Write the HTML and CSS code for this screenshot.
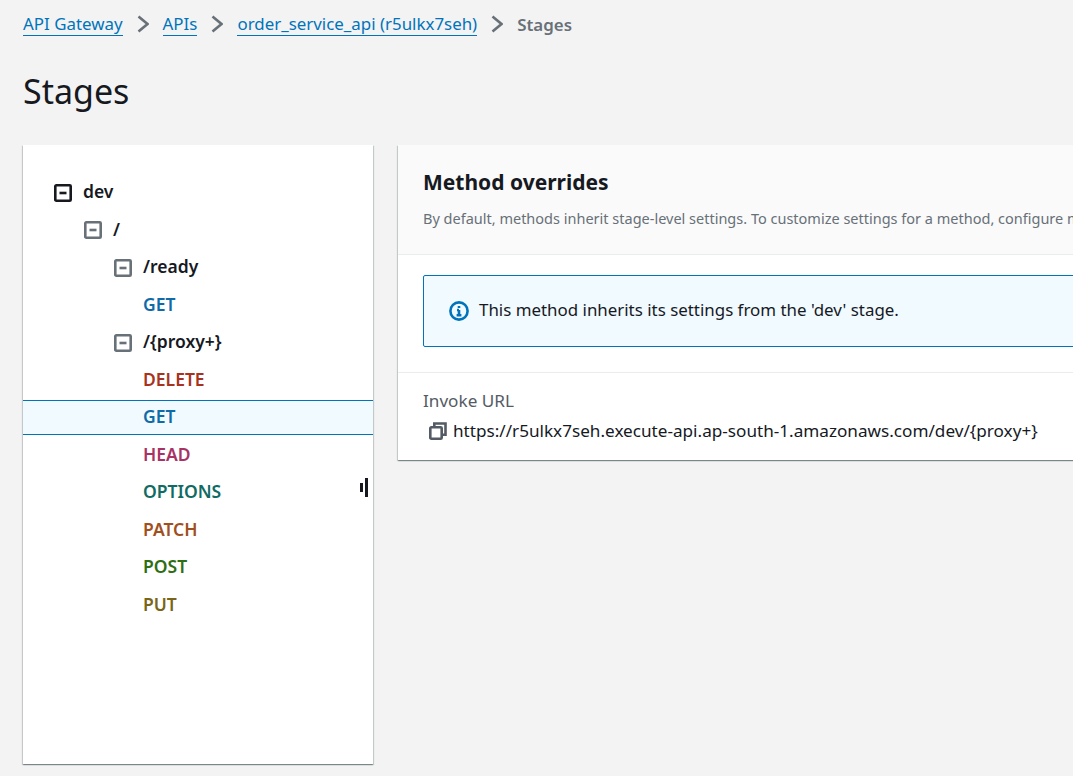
FILE: index.html
```html
<!DOCTYPE html>
<html lang="en">
<head>
    <meta charset="UTF-8">
    <meta name="viewport" content="width=device-width, initial-scale=1.0">
    <title>Stages</title>
    <link rel="stylesheet" href="styles.css">
</head>
<body>
    <!-- Breadcrumbs -->
    <nav class="crumbs">
        <a href="#">API Gateway</a>
        <svg class="chevron" viewBox="0 0 12 18"><path d="M1.5 1.5l9 7.5-9 7.5"/></svg>
        <a href="#">APIs</a>
        <svg class="chevron" viewBox="0 0 12 18"><path d="M1.5 1.5l9 7.5-9 7.5"/></svg>
        <a href="#">order_service_api (r5ulkx7seh)</a>
        <svg class="chevron" viewBox="0 0 12 18"><path d="M1.5 1.5l9 7.5-9 7.5"/></svg>
        <span class="crumb-current">Stages</span>
    </nav>

    <h1>Stages</h1>

    <div class="layout">
        <!-- Stage tree -->
        <aside class="tree">
            <div class="row depth-0 strong">
                <svg class="toggle toggle-dark" viewBox="0 0 18 18"><rect x="1.3" y="1.3" width="15.4" height="15.4" rx="1"/><path d="M5.5 9h7"/></svg>
                <span>dev</span>
            </div>
            <div class="row depth-1 strong">
                <svg class="toggle" viewBox="0 0 18 18"><rect x="1.3" y="1.3" width="15.4" height="15.4" rx="1"/><path d="M5.5 9h7"/></svg>
                <span>/</span>
            </div>
            <div class="row depth-2 strong">
                <svg class="toggle" viewBox="0 0 18 18"><rect x="1.3" y="1.3" width="15.4" height="15.4" rx="1"/><path d="M5.5 9h7"/></svg>
                <span>/ready</span>
            </div>
            <div class="row method get">GET</div>
            <div class="row depth-2 strong">
                <svg class="toggle" viewBox="0 0 18 18"><rect x="1.3" y="1.3" width="15.4" height="15.4" rx="1"/><path d="M5.5 9h7"/></svg>
                <span>/{proxy+}</span>
            </div>
            <div class="row method delete">DELETE</div>
            <div class="row method get selected">GET</div>
            <div class="row method head">HEAD</div>
            <div class="row method options">OPTIONS</div>
            <div class="row method patch">PATCH</div>
            <div class="row method post">POST</div>
            <div class="row method put">PUT</div>
            <div class="handle"><i class="handle-short"></i><i class="handle-long"></i></div>
        </aside>

        <!-- Method panel -->
        <section class="panel">
            <header class="panel-head">
                <h2>Method overrides</h2>
                <p>By default, methods inherit stage-level settings. To customize settings for a method, configure method overrides.</p>
            </header>
            <div class="panel-body">
                <div class="alert">
                    <svg class="info" viewBox="0 0 20 20">
                        <circle cx="10" cy="10" r="8.6"/>
                        <path d="M10 9v5.2M7.6 14.2h4.8M8 9h2"/>
                        <path d="M10 5v2"/>
                    </svg>
                    <span class="alert-text">This method inherits its settings from the 'dev' stage.</span>
                </div>
            </div>
            <div class="panel-foot">
                <div class="url-label">Invoke URL</div>
                <div class="url-line">
                    <svg class="copy" viewBox="0 0 18 18">
                        <rect x="1.3" y="5.3" width="11.4" height="11.4" rx="1"/>
                        <path d="M5.3 5V1.5h11.2v11.2H13"/>
                    </svg>
                    <span>https://r5ulkx7seh.execute-api.ap-south-1.amazonaws.com/dev/{proxy+}</span>
                </div>
            </div>
        </section>
    </div>
</body>
</html>
```

FILE: styles.css
```css
html, body {
    height: 100%;
}

body {
    font-family: "Noto Sans", "Open Sans", sans-serif;
    background-color: #f3f3f3;
    color: #16191f;
    margin: 0;
    padding: 0 0 0 23px;
    overflow: hidden;
    box-sizing: border-box;
}

.crumbs {
    display: flex;
    align-items: center;
    height: 24px;
    padding-top: 12px;
    font-size: 16.9px;
}

.crumbs a {
    color: #0073bb;
    text-decoration: none;
    border-bottom: 1px solid #0073bb;
    line-height: 22px;
}

.chevron {
    width: 12px;
    height: 18px;
    margin: 0 14px;
    fill: none;
    stroke: #687078;
    stroke-width: 2.6;
}

.crumb-current {
    color: #687078;
    font-weight: 600;
}

h1 {
    font-size: 34px;
    font-weight: 400;
    line-height: 44px;
    margin: 33px 0 32px;
}

.layout {
    display: flex;
    align-items: flex-start;
    gap: 25px;
    width: 1100px;
}

.tree {
    position: relative;
    flex: 0 0 350px;
    height: 619px;
    box-sizing: border-box;
    padding-top: 30px;
    background-color: white;
    box-shadow: 0 1px 1px 0 rgba(0, 28, 36, 0.3), 1px 1px 1px 0 rgba(0, 28, 36, 0.15), -1px 1px 1px 0 rgba(0, 28, 36, 0.15);
}

.row {
    display: flex;
    align-items: center;
    gap: 11px;
    height: 35px;
    margin-bottom: 2.5px;
    font-size: 17.5px;
    box-sizing: border-box;
}

.strong {
    font-weight: 600;
}

.strong span {
    padding-bottom: 3px;
}

.depth-0 { padding-left: 31px; }
.depth-1 { padding-left: 61px; }
.depth-2 { padding-left: 91px; }

.toggle {
    width: 18px;
    height: 18px;
    flex-shrink: 0;
    fill: none;
    stroke: #687078;
    stroke-width: 2.6;
}

.toggle-dark {
    stroke: #16191f;
}

.method {
    padding-left: 120px;
    padding-bottom: 3px;
    font-weight: 600;
}

.selected {
    background-color: #f1faff;
    border-top: 1px solid #0073bb;
    border-bottom: 1px solid #0073bb;
}

.get { color: #0f6ba8; }
.delete { color: #a8321e; }
.head { color: #a83263; }
.options { color: #0f6b63; }
.patch { color: #a0501e; }
.post { color: #2e6e14; }
.put { color: #7a6418; }

.handle {
    position: absolute;
    left: 337px;
    top: 333px;
    display: flex;
    align-items: center;
    gap: 2px;
    height: 19px;
}

.handle i {
    display: block;
    background-color: #16191f;
}

.handle-short {
    width: 3px;
    height: 9px;
}

.handle-long {
    width: 3px;
    height: 19px;
}

.panel {
    flex: 1;
    min-width: 0;
    background-color: white;
    box-shadow: 0 1px 1px 0 rgba(0, 28, 36, 0.3), 1px 1px 1px 0 rgba(0, 28, 36, 0.15), -1px 1px 1px 0 rgba(0, 28, 36, 0.15);
    white-space: nowrap;
    overflow: hidden;
}

.panel-head {
    height: 110px;
    box-sizing: border-box;
    padding: 22px 25px 0;
    background-color: #fafafa;
    border-bottom: 1px solid #eaeded;
}

.panel-head h2 {
    font-size: 21px;
    font-weight: 700;
    line-height: 30px;
    margin: 0;
}

.panel-head p {
    font-size: 14.5px;
    line-height: 22px;
    color: #687078;
    margin: 10px 0 0;
}

.panel-body {
    padding: 20px 0 25px 25px;
    border-bottom: 1px solid #eaeded;
}

.alert {
    display: flex;
    align-items: center;
    gap: 10px;
    height: 72px;
    box-sizing: border-box;
    padding-left: 25px;
    font-size: 16.9px;
    background-color: #f1faff;
    border: 1px solid #0073bb;
    border-radius: 2px;
}

.alert-text {
    padding-bottom: 4px;
}

.info {
    width: 20px;
    height: 20px;
    flex-shrink: 0;
    fill: none;
    stroke: #0073bb;
    stroke-width: 2.6;
}

.panel-foot {
    height: 87px;
    box-sizing: border-box;
    padding: 15px 25px 0;
    font-size: 17.15px;
}

.url-label {
    color: #545b64;
    line-height: 26px;
}

.url-line {
    display: flex;
    align-items: center;
    gap: 6px;
    line-height: 26px;
    margin-top: 4px;
    padding-left: 6px;
}

.copy {
    width: 18px;
    height: 18px;
    flex-shrink: 0;
    fill: none;
    stroke: #545b64;
    stroke-width: 2.6;
}
```
